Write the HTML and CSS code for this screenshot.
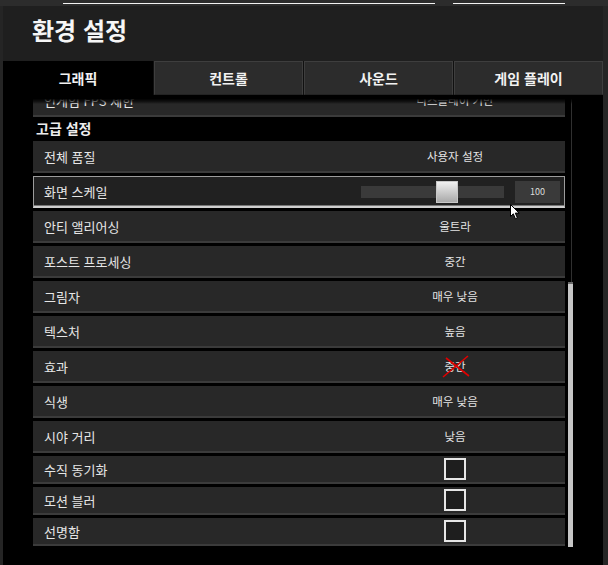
FILE: index.html
```html
<!DOCTYPE html>
<html lang="ko">
<head>
<meta charset="utf-8">
<title>환경 설정</title>
<link rel="stylesheet" href="styles.css">
</head>
<body>
<div class="strip">
  <span class="line l1"></span>
  <span class="line l2"></span>
</div>
<div class="window">
  <header class="header">
    <h1 class="title">환경 설정</h1>
  </header>
  <nav class="tabs">
    <div class="tab active">그래픽</div>
    <div class="tab">컨트롤</div>
    <div class="tab">사운드</div>
    <div class="tab">게임 플레이</div>
  </nav>
  <main class="content">
    <div class="list">
      <div class="row partial">
        <span class="label">인게임 FPS 제한</span>
        <span class="value">디스플레이 기반</span>
      </div>
      <div class="section">고급 설정</div>
      <div class="row">
        <span class="label">전체 품질</span>
        <span class="value">사용자 설정</span>
      </div>
      <div class="row slider-row">
        <span class="label">화면 스케일</span>
        <div class="slider">
          <div class="track"><div class="thumb"></div></div>
          <div class="numbox">100</div>
        </div>
        <svg class="cursor" width="11" height="16" viewBox="0 0 11 16"><path d="M0.5 0.5 L0.5 12.5 L3.3 9.8 L5.4 14.8 L7.4 13.9 L5.3 9.1 L9.2 9.1 Z" fill="#fff" stroke="#000" stroke-width="1"/></svg>
      </div>
      <div class="row">
        <span class="label">안티 앨리어싱</span>
        <span class="value">울트라</span>
      </div>
      <div class="row">
        <span class="label">포스트 프로세싱</span>
        <span class="value">중간</span>
      </div>
      <div class="row">
        <span class="label">그림자</span>
        <span class="value">매우 낮음</span>
      </div>
      <div class="row">
        <span class="label">텍스처</span>
        <span class="value">높음</span>
      </div>
      <div class="row">
        <span class="label">효과</span>
        <span class="value"><span class="struck">중간<svg class="redx" width="28" height="23" viewBox="0 0 28 23"><path d="M1 22 L26 1 M4 3 L27 21" stroke="#e00000" stroke-width="1.6" fill="none"/></svg></span></span>
      </div>
      <div class="row">
        <span class="label">식생</span>
        <span class="value">매우 낮음</span>
      </div>
      <div class="row">
        <span class="label">시야 거리</span>
        <span class="value">낮음</span>
      </div>
      <div class="row check-row">
        <span class="label">수직 동기화</span>
        <span class="value"><span class="checkbox"></span></span>
      </div>
      <div class="row check-row">
        <span class="label">모션 블러</span>
        <span class="value"><span class="checkbox"></span></span>
      </div>
      <div class="row check-row">
        <span class="label">선명함</span>
        <span class="value"><span class="checkbox"></span></span>
      </div>
    </div>
    <div class="scrollbar">
      <div class="scroll-track"></div>
      <div class="scroll-thumb"></div>
    </div>
    <div class="fade"></div>
  </main>
</div>
</body>
</html>
```

FILE: styles.css
```css
* { box-sizing: border-box; }

html, body {
  margin: 0;
  padding: 0;
}

body {
  width: 608px;
  height: 565px;
  overflow: hidden;
  background: #252525;
  font-family: "Noto Sans CJK KR", "Noto Sans", sans-serif;
  color: #e6e6e6;
}

.strip {
  height: 6px;
  background: #2c2c2c;
  display: flex;
  align-items: flex-start;
  padding-top: 3px;
}

.line {
  display: block;
  height: 1px;
  background: #f2f2f2;
}

.l1 { margin-left: 63px; width: 372px; }
.l2 { margin-left: 18px; width: 112px; }

.window {
  margin-left: 3px;
  width: 600px;
  height: 559px;
  display: flex;
  flex-direction: column;
}

.header {
  height: 55px;
  background: #1f1f1f;
  padding-left: 29px;
  padding-top: 11px;
  display: flex;
  align-items: flex-start;
}

.title {
  margin: 0;
  font-size: 24px;
  font-weight: 700;
  color: #f6f6f6;
  letter-spacing: 0;
  line-height: 26px;
}

.tabs {
  display: grid;
  grid-template-columns: 150px 149px 149px 149px;
  column-gap: 1px;
  height: 34px;
  background: #101010;
}

.tab {
  display: flex;
  align-items: center;
  justify-content: center;
  font-size: 14px;
  font-weight: 700;
  color: #f2f2f2;
  background: #2c2c2c;
  border: 1px solid #3e3e3e;
  border-bottom-color: #232323;
}

.tab.active {
  background: #000;
  border-color: #000;
}

.content {
  flex: 1;
  background: #000;
  display: flex;
  padding-left: 30px;
  overflow: hidden;
  position: relative;
}

.fade {
  position: absolute;
  left: 0;
  right: 0;
  top: 0;
  height: 9px;
  background: linear-gradient(#000 0, #000 40%, rgba(0,0,0,0.55) 75%, rgba(0,0,0,0) 100%);
}

.list {
  width: 532px;
  display: flex;
  flex-direction: column;
  gap: 3px;
}

.row {
  flex: 0 0 32px;
  height: 32px;
  display: grid;
  grid-template-columns: 1fr 184px;
  align-items: center;
  padding: 0 18px 0 11px;
  background: #282828;
  border-bottom: 2px solid #3b3b3b;
  position: relative;
}

.row.partial {
  margin-top: -10px;
}

.label {
  font-size: 13px;
  color: #e6e6e6;
  white-space: nowrap;
}

.value {
  font-size: 11.5px;
  color: #e4e4e4;
  text-align: center;
  display: flex;
  justify-content: center;
  align-items: center;
}

.section {
  flex: 0 0 22px;
  margin-top: -3px;
  margin-bottom: -1px;
  height: 22px;
  line-height: 22px;
  font-size: 14px;
  font-weight: 700;
  padding-left: 3px;
  color: #ececec;
}

.slider-row {
  display: flex;
  justify-content: space-between;
  padding-right: 4px;
  padding-left: 10px;
  background: #212121;
  border: 1px solid #9c9c9c;
  border-bottom: 2px solid #d0d0d0;
  box-shadow: inset 0 -2px 0 -1px #777;
  z-index: 2;
}

.slider {
  display: flex;
  align-items: center;
  gap: 11px;
}

.track {
  width: 143px;
  height: 12px;
  background: #3a3a3a;
  display: flex;
  align-items: center;
  padding-left: 75px;
}

.thumb {
  width: 22px;
  height: 22px;
  background: linear-gradient(#f0f0f0, #a9a9a9);
  border: 1px solid #c8c8c8;
}

.numbox {
  width: 45px;
  height: 22px;
  background: #3a3a3a;
  font-size: 9px;
  color: #dcdcdc;
  display: flex;
  align-items: center;
  justify-content: center;
}

.cursor {
  position: absolute;
  left: 476px;
  top: 27px;
  z-index: 3;
}

.struck {
  position: relative;
  display: inline-block;
}

.redx {
  position: absolute;
  left: -2px;
  top: -3px;
}

.check-row {
  flex: 0 0 28px;
  height: 28px;
}

.checkbox {
  display: block;
  width: 22px;
  height: 22px;
  border: 2px solid #e6e6e6;
  background: #1e1e1e;
}

.scrollbar {
  margin-left: 3px;
  width: 5px;
  display: flex;
  flex-direction: column;
}

.scroll-track {
  flex: 0 0 187px;
  margin-left: 3px;
  width: 1px;
  background: #303030;
}

.scroll-thumb {
  flex: 0 0 265px;
  background: #c6c6c6;
  border-top: 2px solid #6a6a6a;
}
```
